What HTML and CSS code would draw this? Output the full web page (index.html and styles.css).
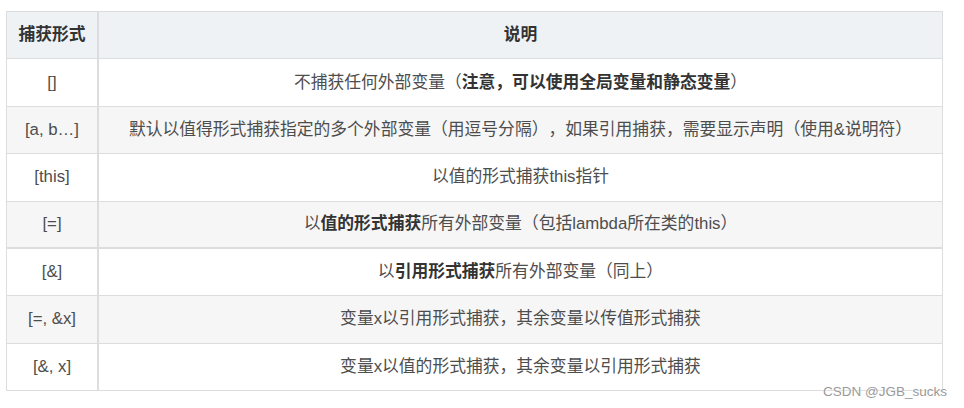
FILE: index.html
```html
<!DOCTYPE html>
<html lang="zh-CN">
<head>
<meta charset="utf-8">
<link rel="stylesheet" href="styles.css">
</head>
<body>
<div class="page">
<table class="tbl">
  <thead>
    <tr><th class="c1">捕获形式</th><th class="c2">说明</th></tr>
  </thead>
  <tbody>
    <tr><td class="c1">[]</td><td class="c2">不捕获任何外部变量（<b>注意，可以使用全局变量和静态变量</b>）</td></tr>
    <tr class="alt"><td class="c1">[a, b…]</td><td class="c2">默认以值得形式捕获指定的多个外部变量（用逗号分隔），如果引用捕获，需要显示声明（使用&amp;说明符）</td></tr>
    <tr><td class="c1">[this]</td><td class="c2">以值的形式捕获this指针</td></tr>
    <tr class="alt thick"><td class="c1">[=]</td><td class="c2">以<b>值的形式捕获</b>所有外部变量（包括lambda所在类的this）</td></tr>
    <tr><td class="c1">[&amp;]</td><td class="c2">以<b>引用形式捕获</b>所有外部变量（同上）</td></tr>
    <tr class="alt"><td class="c1">[=, &amp;x]</td><td class="c2">变量x以引用形式捕获，其余变量以传值形式捕获</td></tr>
    <tr><td class="c1">[&amp;, x]</td><td class="c2">变量x以值的形式捕获，其余变量以引用形式捕获</td></tr>
  </tbody>
</table>
<div class="mark">CSDN @JGB_sucks</div>
</div>
</body>
</html>
```
FILE: styles.css
```css
html, body {
  margin: 0;
  padding: 0;
  background: #ffffff;
}
.page {
  position: relative;
  width: 964px;
  height: 408px;
  padding: 11px 0 0 6px;
  box-sizing: border-box;
  font-family: "Liberation Sans", "Noto Sans CJK SC", sans-serif;
  font-size: 16.8px;
  color: #4d4d4d;
  text-spacing-trim: space-all;
}
.tbl {
  width: 937px;
  border-collapse: separate;
  border-spacing: 0;
  border-top: 1px solid #dddddd;
  border-left: 1px solid #dddddd;
  table-layout: fixed;
}
.tbl th, .tbl td {
  height: 46.375px;
  padding: 0;
  text-align: center;
  vertical-align: middle;
  line-height: 22px;
  border-right: 1px solid #dddddd;
  border-bottom: 1px solid #dddddd;
  white-space: nowrap;
}
.tbl .c1 {
  width: 90px;
  border-right: 2px solid #dddddd;
}
.tbl th {
  background: #eff2f5;
  color: #333333;
  font-weight: bold;
}
.tbl tr.alt td {
  background: #f6f6f6;
}
.tbl tr.thick td {
  border-bottom: 2px solid #dddddd;
  height: 45.375px;
}
.tbl b {
  color: #333333;
  font-weight: bold;
}
.mark {
  position: absolute;
  left: 823px;
  top: 383px;
  font-family: "Liberation Sans", sans-serif;
  font-size: 13.5px;
  line-height: 18px;
  color: #9a9a9a;
  text-shadow: 0 0 2px #ffffff, 0 0 1px #ffffff;
}
```
